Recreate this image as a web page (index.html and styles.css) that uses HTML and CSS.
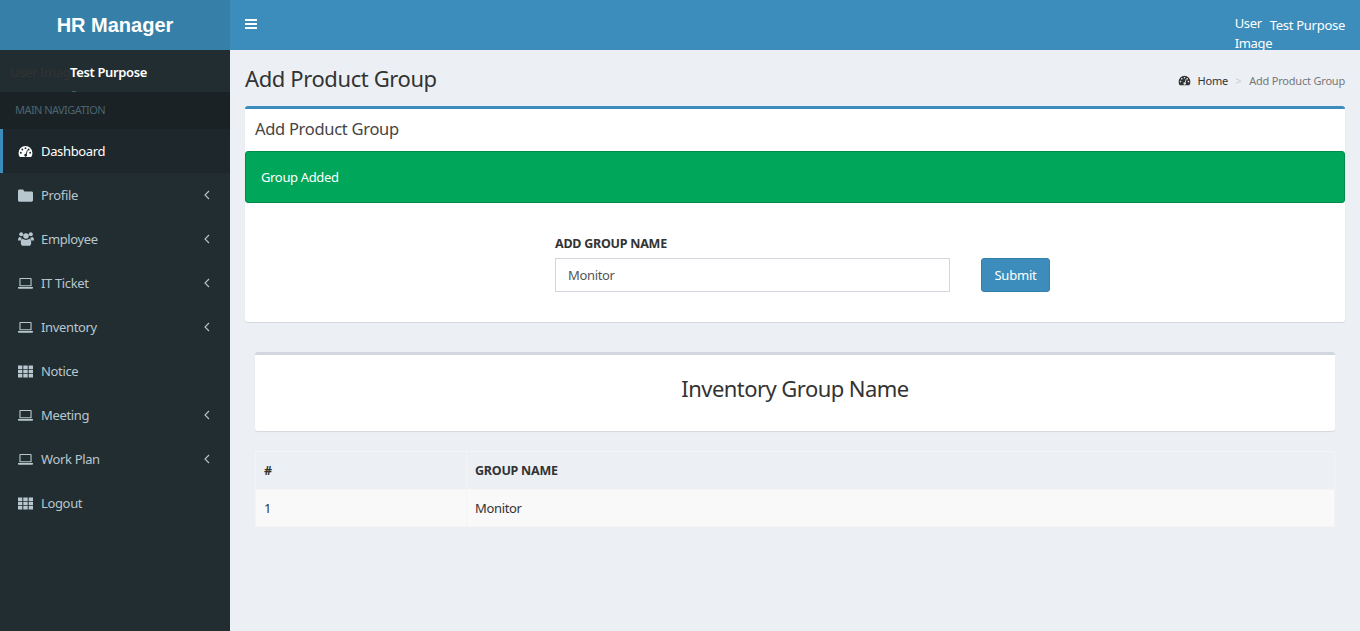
FILE: index.html
```html
<!DOCTYPE html>
<html>

<head>
    <title>Add Product Group</title>
    <link rel="stylesheet" href="styles.css">
</head>

<body>
    <svg class="icon-defs" width="0" height="0">
        <symbol id="i-gauge" viewBox="0 0 16 14">
            <path fill-rule="evenodd" d="M8 1a7.500 7.500 0 0 0-7.500 7.500c0 1.700.5 3.200 1.400 4.500h12.200c.9-1.300 1.400-2.800 1.400-4.500A7.500 7.500 0 0 0 8 1zM8 2.400a1 1 0 1 1 0 2 1 1 0 0 1 0-2zM4.600 3.900a1 1 0 1 1 0 2 1 1 0 0 1 0-2zM11.400 3.900a1 1 0 1 1 0 2 1 1 0 0 1 0-2zM3 7.400a1 1 0 1 1 0 2 1 1 0 0 1 0-2zM13 7.400a1 1 0 1 1 0 2 1 1 0 0 1 0-2zM9.700 5.200l.8.300-1.200 4.400a1.500 1.500 0 1 1-2.600 1.200 1.500 1.500 0 0 1 1.700-1.700z"/>
        </symbol>
        <symbol id="i-folder" viewBox="0 0 14 12">
            <path d="M1.300 0.500h3.400l1.300 1.700h6.700c.7 0 1.300.6 1.300 1.300v7c0 .7-.6 1.300-1.300 1.300H1.300C.6 11.800 0 11.200 0 10.500V1.800C0 1.100.6.500 1.300.500z"/>
        </symbol>
        <symbol id="i-users" viewBox="0 0 16 14">
            <circle cx="3.200" cy="2.200" r="2"/>
            <circle cx="12.800" cy="2.200" r="2"/>
            <circle cx="8" cy="4" r="2.800"/>
            <path d="M0 8.500c0-2 .7-3.400 1.800-3.400.6.500 1.300.7 2 .6-.3.600-.5 1.800-.5 2.800H0zM16 8.500c0-2-.7-3.400-1.800-3.400-.6.500-1.300.7-2 .6.300.600.500 1.800.500 2.800H16z"/>
            <path d="M4.800 6.800c.8.700 2 1.100 3.200 1.100s2.400-.4 3.200-1.100c1.300 0 2 1.700 2 3.900 0 1.900-.9 3.100-2.200 3.100H5c-1.300 0-2.200-1.200-2.200-3.100 0-2.200.7-3.900 2-3.900z"/>
        </symbol>
        <symbol id="i-laptop" viewBox="0 0 16 12">
            <path fill-rule="evenodd" d="M2.500 0h11c.6 0 1 .4 1 1v8h-13V1c0-.6.400-1 1-1zM2.700 1.200v6.600h10.600V1.200z"/>
            <path d="M0 9.800h16v.9c0 .5-.4.900-.9.900H.9c-.5 0-.9-.4-.9-.9z"/>
        </symbol>
        <symbol id="i-th" viewBox="0 0 15 12">
            <path d="M0 0h4.300v3.400H0zM5.300 0h4.400v3.400H5.300zM10.700 0H15v3.400h-4.300zM0 4.300h4.300v3.400H0zM5.300 4.300h4.400v3.400H5.300zM10.700 4.300H15v3.400h-4.300zM0 8.600h4.300V12H0zM5.300 8.600h4.400V12H5.300zM10.700 8.600H15V12h-4.300z"/>
        </symbol>
        <symbol id="i-angle" viewBox="0 0 6 10">
            <path d="M5 1 1 5l4 4" fill="none" stroke="currentColor" stroke-width="1.100"/>
        </symbol>
    </svg>

    <div class="wrapper">
        <aside class="sidebar">
            <div class="logo">HR Manager</div>
            <div class="user-panel">
                <span class="user-alt">User Image</span>
                <strong class="user-name">Test Purpose</strong>
                <i class="user-dot"></i>
            </div>
            <div class="nav-header">MAIN NAVIGATION</div>
            <ul class="menu">
                <li class="active"><svg class="ico gauge"><use href="#i-gauge"/></svg><span>Dashboard</span></li>
                <li><svg class="ico folder"><use href="#i-folder"/></svg><span>Profile</span><svg class="angle"><use href="#i-angle"/></svg></li>
                <li><svg class="ico users"><use href="#i-users"/></svg><span>Employee</span><svg class="angle"><use href="#i-angle"/></svg></li>
                <li><svg class="ico laptop"><use href="#i-laptop"/></svg><span>IT Ticket</span><svg class="angle"><use href="#i-angle"/></svg></li>
                <li><svg class="ico laptop"><use href="#i-laptop"/></svg><span>Inventory</span><svg class="angle"><use href="#i-angle"/></svg></li>
                <li><svg class="ico th"><use href="#i-th"/></svg><span>Notice</span></li>
                <li><svg class="ico laptop"><use href="#i-laptop"/></svg><span>Meeting</span><svg class="angle"><use href="#i-angle"/></svg></li>
                <li><svg class="ico laptop"><use href="#i-laptop"/></svg><span>Work Plan</span><svg class="angle"><use href="#i-angle"/></svg></li>
                <li><svg class="ico th"><use href="#i-th"/></svg><span>Logout</span></li>
            </ul>
        </aside>

        <div class="main">
            <header class="navbar">
                <div class="toggle"><i></i><i></i><i></i></div>
                <div class="nav-user">
                    <span class="nav-user-alt">User Image</span>
                    <span class="nav-user-name">Test Purpose</span>
                </div>
            </header>

            <section class="content-header">
                <h1>Add Product Group</h1>
                <ol class="breadcrumb">
                    <li><svg class="ico gauge"><use href="#i-gauge"/></svg><span>Home</span></li>
                    <li class="sep">&gt;</li>
                    <li class="current">Add Product Group</li>
                </ol>
            </section>

            <section class="content">
                <div class="box box-primary">
                    <h3 class="box-title">Add Product Group</h3>
                    <div class="alert">Group Added</div>
                    <form class="group-form">
                        <div class="field">
                            <label for="group">ADD GROUP NAME</label>
                            <input id="group" type="text" value="Monitor">
                        </div>
                        <button type="button" class="btn">Submit</button>
                    </form>
                </div>

                <div class="inner">
                    <div class="box box-plain">
                        <h2>Inventory Group Name</h2>
                    </div>
                    <table class="group-table">
                        <thead>
                            <tr><th class="col-num">#</th><th>GROUP NAME</th></tr>
                        </thead>
                        <tbody>
                            <tr><td>1</td><td>Monitor</td></tr>
                        </tbody>
                    </table>
                </div>
            </section>
        </div>
    </div>
</body>

</html>
```

FILE: styles.css
```css
* {
    box-sizing: border-box;
}
body {
    margin: 0;
    font-family: 'Noto Sans', sans-serif;
    font-size: 13px;
    letter-spacing: -0.35px;
    color: #333;
    background-color: #ecf0f5;
}
.icon-defs {
    position: absolute;
}
.wrapper {
    display: flex;
    height: 631px;
    overflow: hidden;
}

/* sidebar */
.sidebar {
    width: 230px;
    flex: none;
    background-color: #222d32;
}
.logo {
    height: 50px;
    line-height: 50px;
    background-color: #367fa9;
    color: #fff;
    font-family: 'Liberation Sans', Arial, sans-serif;
    font-size: 20px;
    font-weight: bold;
    letter-spacing: 0;
    text-align: center;
}
.user-panel {
    position: relative;
    height: 42px;
    overflow: hidden;
}
.user-alt {
    position: absolute;
    top: 13px;
    left: 10px;
    color: #333;
}
.user-name {
    position: absolute;
    top: 13px;
    left: 70px;
    color: #fff;
    font-weight: 600;
}
.user-dot {
    position: absolute;
    left: 72px;
    bottom: 0;
    width: 4px;
    height: 1px;
    background-color: #2e6b45;
}
.nav-header {
    height: 37px;
    line-height: 35px;
    padding-left: 15px;
    background-color: #1a2226;
    color: #4b646f;
    font-size: 11px;
    letter-spacing: -0.55px;
}
.menu {
    list-style: none;
    margin: 0;
    padding: 0;
}
.menu li {
    display: flex;
    align-items: center;
    height: 44px;
    padding: 0 20px 0 18px;
    color: #b8c7ce;
}
.menu li.active {
    padding-left: 15px;
    border-left: 3px solid #3c8dbc;
    background-color: #1e282c;
    color: #fff;
}
.menu li span {
    flex: 1;
}
.ico {
    flex: none;
    width: 15px;
    height: 13px;
    margin-right: 8px;
    fill: currentColor;
}
.ico.users {
    width: 16px;
    height: 14px;
    margin-right: 7px;
}
.angle {
    flex: none;
    width: 6px;
    height: 10px;
    color: #b8c7ce;
}

/* top bar */
.main {
    flex: 1;
    min-width: 0;
}
.navbar {
    display: flex;
    justify-content: space-between;
    height: 50px;
    overflow: hidden;
    background-color: #3c8dbc;
    color: #fff;
}
.toggle {
    display: flex;
    flex-direction: column;
    gap: 2px;
    padding: 19px 15px;
}
.toggle i {
    display: block;
    width: 12px;
    height: 2px;
    background-color: #fff;
}
.nav-user {
    display: flex;
    padding: 16px 15px 0 0;
}
.nav-user-alt {
    width: 35px;
    margin-top: -3px;
    line-height: 20px;
}
.nav-user-name {
    letter-spacing: -0.28px;
}

/* page title */
.content-header {
    display: flex;
    justify-content: space-between;
    align-items: center;
    height: 56px;
    padding: 0 15px;
}
.content-header h1 {
    margin: 0;
    font-size: 22px;
    font-weight: 400;
    letter-spacing: -0.4px;
}
.breadcrumb {
    display: flex;
    align-items: center;
    list-style: none;
    margin: 4px 0 0;
    padding: 0;
    font-size: 11px;
    letter-spacing: -0.2px;
}
.breadcrumb li {
    display: flex;
    align-items: center;
}
.breadcrumb .ico {
    width: 13px;
    height: 11px;
    margin-right: 7px;
}
.breadcrumb .sep {
    margin: 0 7.500px;
    color: #ccc;
}
.breadcrumb .current {
    color: #777;
}

/* boxes */
.content {
    padding: 0 15px;
}
.box {
    background-color: #fff;
    border-radius: 3px;
    box-shadow: 0 1px 1px rgba(0, 0, 0, 0.1);
}
.box-primary {
    height: 216px;
    border-top: 3px solid #3c8dbc;
}
.box-title {
    margin: 0;
    height: 42px;
    line-height: 40px;
    padding-left: 10px;
    font-size: 16.500px;
    font-weight: 400;
    letter-spacing: -0.3px;
    color: #444;
}
.alert {
    height: 52px;
    line-height: 50px;
    padding-left: 15px;
    background-color: #00a65a;
    border: 1px solid #008d4c;
    border-radius: 3px;
    color: #fff;
}
.group-form {
    display: flex;
    align-items: flex-end;
    gap: 31px;
    padding: 30px 0 0 310px;
}
.field label {
    display: block;
    height: 25px;
    line-height: 21px;
    font-weight: 700;
    font-size: 12.500px;
    letter-spacing: -0.25px;
}
.field input {
    display: block;
    width: 395px;
    height: 34px;
    padding: 0 12px;
    border: 1px solid #d2d6de;
    font-family: inherit;
    font-size: 13px;
    letter-spacing: inherit;
    color: #555;
    outline: none;
}
.btn {
    width: 69px;
    height: 34px;
    background-color: #3c8dbc;
    border: 1px solid #367fa9;
    border-radius: 3px;
    color: #fff;
    font-family: inherit;
    font-size: 13px;
    letter-spacing: -0.2px;
}

.inner {
    padding: 30px 10px 0;
}
.box-plain {
    height: 79px;
    border-top: 3px solid #d2d6de;
}
.box-plain h2 {
    margin: 0;
    line-height: 66px;
    font-size: 22px;
    font-weight: 400;
    letter-spacing: -0.55px;
    text-align: center;
}

/* table */
.group-table {
    width: 100%;
    margin-top: 20px;
    border-collapse: collapse;
}
.group-table th,
.group-table td {
    height: 38px;
    padding: 0 8px;
    border: 1px solid #f4f4f4;
    text-align: left;
}
.group-table td {
    height: 37px;
}
.group-table th {
    font-weight: 700;
    font-size: 12.500px;
    letter-spacing: -0.25px;
}
.group-table tbody tr {
    background-color: #f9f9f9;
}
.col-num {
    width: 211px;
}
```
